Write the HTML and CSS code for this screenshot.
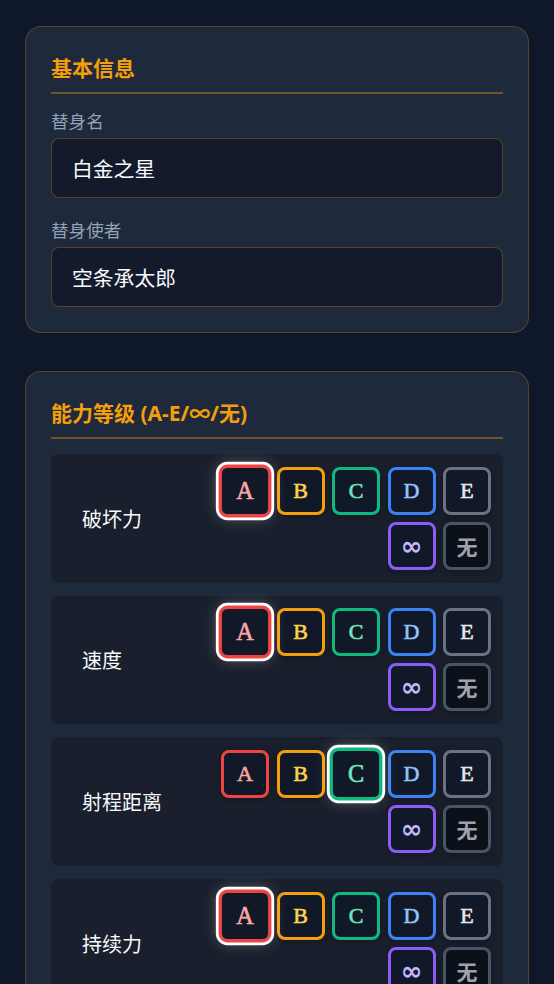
FILE: index.html
```html
<!DOCTYPE html>
<html lang="zh-CN">
<head>
	<meta charset="UTF-8">
	<title>替身档案</title>
	<meta name="viewport" content="width=device-width, initial-scale=1.0">
	<link rel="stylesheet" href="styles.css">
</head>
<body>
	<section class="card">
		<h2 class="card-title">基本信息</h2>
		<div class="field">
			<label class="field-label" for="stand-name">替身名</label>
			<input class="field-input" id="stand-name" type="text" value="白金之星">
		</div>
		<div class="field">
			<label class="field-label" for="stand-user">替身使者</label>
			<input class="field-input" id="stand-user" type="text" value="空条承太郎">
		</div>
	</section>

	<section class="card">
		<h2 class="card-title">能力等级 (A-E/∞/无)</h2>

		<div class="stat-row">
			<span class="stat-name">破坏力</span>
			<div class="grades">
				<button class="grade grade-a is-active">A</button>
				<button class="grade grade-b">B</button>
				<button class="grade grade-c">C</button>
				<button class="grade grade-d">D</button>
				<button class="grade grade-e">E</button>
				<button class="grade grade-inf">∞</button>
				<button class="grade grade-none">无</button>
			</div>
		</div>

		<div class="stat-row">
			<span class="stat-name">速度</span>
			<div class="grades">
				<button class="grade grade-a is-active">A</button>
				<button class="grade grade-b">B</button>
				<button class="grade grade-c">C</button>
				<button class="grade grade-d">D</button>
				<button class="grade grade-e">E</button>
				<button class="grade grade-inf">∞</button>
				<button class="grade grade-none">无</button>
			</div>
		</div>

		<div class="stat-row">
			<span class="stat-name">射程距离</span>
			<div class="grades">
				<button class="grade grade-a">A</button>
				<button class="grade grade-b">B</button>
				<button class="grade grade-c is-active">C</button>
				<button class="grade grade-d">D</button>
				<button class="grade grade-e">E</button>
				<button class="grade grade-inf">∞</button>
				<button class="grade grade-none">无</button>
			</div>
		</div>

		<div class="stat-row">
			<span class="stat-name">持续力</span>
			<div class="grades">
				<button class="grade grade-a is-active">A</button>
				<button class="grade grade-b">B</button>
				<button class="grade grade-c">C</button>
				<button class="grade grade-d">D</button>
				<button class="grade grade-e">E</button>
				<button class="grade grade-inf">∞</button>
				<button class="grade grade-none">无</button>
			</div>
		</div>
	</section>
</body>
</html>
```

FILE: styles.css
```css
*{
	box-sizing: border-box;
}
body{
	margin: 0;
	padding: 26px 25px;
	background: #0f172a;
	color: #f1f5f9;
	font-family: "Noto Sans", "Noto Sans CJK SC", sans-serif;
}
.card{
	background: #1e293b;
	border: 1px solid rgba(245, 158, 11, 0.25);
	border-radius: 16px;
	padding: 25px;
	margin-bottom: 38px;
}
.card-title{
	margin: 0 0 15px;
	padding-bottom: 8px;
	border-bottom: 2px solid rgba(245, 158, 11, 0.38);
	color: #f59e0b;
	font-size: 21px;
	font-weight: 700;
	line-height: 32px;
}

/* 基本信息 */
.field{
	margin-bottom: 20px;
}
.field:last-child{
	margin-bottom: 0;
}
.field-label{
	display: block;
	margin-bottom: 5px;
	color: #94a3b8;
	font-size: 17.6px;
	line-height: 24px;
}
.field-input{
	display: block;
	width: 100%;
	height: 60px;
	padding: 0 20px;
	background: #131a2c;
	border: 1px solid rgba(245, 158, 11, 0.3);
	border-radius: 8px;
	color: #f8fafc;
	font-family: inherit;
	font-size: 20.8px;
	outline: none;
}

/* 能力等级 */
.stat-row{
	display: flex;
	align-items: center;
	justify-content: space-between;
	padding: 12.8px 12px 12.8px 31px;
	margin-bottom: 13px;
	background: #1a1f2d;
	border-radius: 8px;
}
.stat-name{
	font-size: 20px;
	color: #f8fafc;
}
.grades{
	display: flex;
	flex-wrap: wrap;
	justify-content: flex-end;
	gap: 7px 7.5px;
	width: 271px;
}
.grade{
	width: 48px;
	height: 48px;
	padding: 0;
	border: 3px solid;
	border-radius: 8px;
	background: #111827;
	font-family: "Liberation Serif", "DejaVu Serif", serif;
	font-size: 22px;
	font-weight: 400;
	-webkit-text-stroke: 0.6px currentColor;
	box-shadow: 0 2px 6px rgba(0, 0, 0, 0.25);
	cursor: pointer;
}
.grade-a{ border-color: #ef4444; color: #fca5a5; }
.grade-b{ border-color: #f59e0b; color: #fcd34d; }
.grade-c{ border-color: #10b981; color: #6ee7b7; }
.grade-d{ border-color: #3b82f6; color: #93c5fd; }
.grade-e{ border-color: #6b7280; color: #e5e7eb; }
.grade-inf{
	border-color: #8b5cf6;
	color: #c4b5fd;
	font-family: "DejaVu Sans", sans-serif;
	font-size: 26px;
	font-weight: 700;
	-webkit-text-stroke: 0;
}
.grade-none{
	border-color: #4b5563;
	background: #0c1019;
	color: #9ca3af;
	font-family: "Noto Sans CJK SC", sans-serif;
	font-size: 21px;
	font-weight: 700;
	-webkit-text-stroke: 0;
}
.grade.is-active{
	transform: scale(1.1);
	box-shadow: 0 0 0 2.5px #fff, 0 0 14px rgba(255, 255, 255, 0.35);
}
```
